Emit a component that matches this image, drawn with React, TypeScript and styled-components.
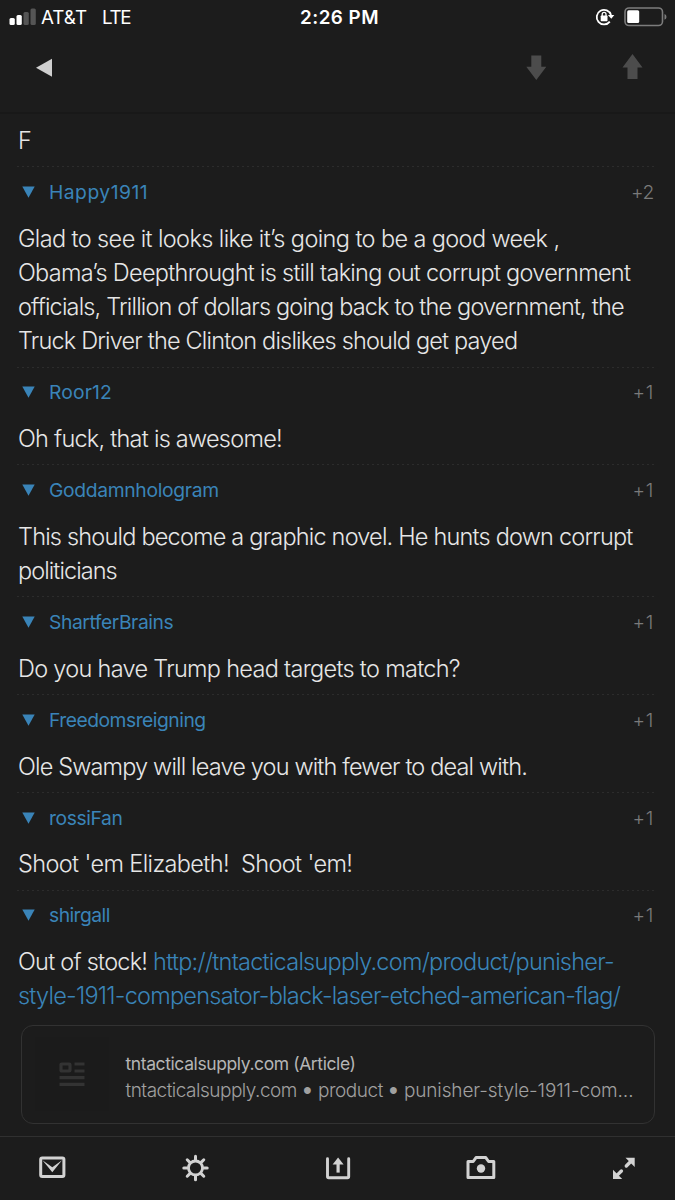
import React from "react";
import styled, { createGlobalStyle } from "styled-components";

const Global = createGlobalStyle`
  * { box-sizing: border-box; }
  body { margin: 0; background: #1c1c1c; }
`;

const Screen = styled.div`
  width: 675px;
  height: 1200px;
  display: flex;
  flex-direction: column;
  overflow: hidden;
  background: #1c1c1c;
  color: #e6e6e6;
  font-family: Inter, "Liberation Sans", sans-serif;
  font-weight: 300;
`;

const StatusBar = styled.header`
  height: 34px;
  display: grid;
  grid-template-columns: 1fr auto 1fr;
  align-items: center;
  padding: 0 8px 0 9px;
  color: #fff;
  font-size: 18.8px;
  font-weight: 400;
`;

const Carrier = styled.div`
  display: flex;
  align-items: center;
  gap: 4px;
  white-space: pre;
`;

const Network = styled.span`
  margin-left: 11px;
  letter-spacing: -1.3px;
`;

const Clock = styled.div`
  margin-left: 3px;
  font-weight: 600;
  letter-spacing: 0.5px;
`;

const Indicators = styled.div`
  display: flex;
  justify-content: flex-end;
  align-items: center;
  gap: 9px;
`;

const NavBar = styled.nav`
  height: 80px;
  display: flex;
  align-items: center;
  padding: 0 32px 12px 35px;
  border-bottom: 2px solid #181818;
`;

const NavArrows = styled.div`
  margin-left: auto;
  display: flex;
  gap: 74px;
`;

const Feed = styled.main`
  flex: 1;
  padding: 9.8px 20px 0 18px;
`;

const Line = styled.span<{ $tracking: number }>`
  display: block;
  white-space: pre;
  letter-spacing: ${(p) => p.$tracking}px;
`;

const Body = styled.p`
  margin: 0;
  font-size: 23.5px;
  line-height: 34.2px;
`;

const Comment = styled.article`
  padding-bottom: 8.2px;
`;

const Rule = styled.div`
  height: 1px;
  margin-left: -1px;
  background: repeating-linear-gradient(90deg, #2c2c2c 0 2px, transparent 2px 5px);
`;

const CommentHead = styled.header`
  height: 54.4px;
  display: flex;
  align-items: center;
  padding: 0 1px 5px 4px;
`;

const Author = styled.a<{ $tracking: number }>`
  margin-left: 14px;
  color: #3a84b8;
  font-size: 19.3px;
  font-weight: 400;
  letter-spacing: ${(p) => p.$tracking}px;
`;

const Score = styled.span<{ $tracking: number }>`
  margin-left: auto;
  color: #7a7a7a;
  font-size: 19.3px;
  letter-spacing: ${(p) => p.$tracking}px;
`;

const Link = styled.a`
  color: #3a84b8;
`;

const LinkCard = styled.a`
  height: 99px;
  margin: 3px 0 0 2.5px;
  padding: 0 18px 0 13px;
  display: flex;
  align-items: center;
  border: 1.5px solid #323232;
  border-radius: 12px;
`;

const Thumb = styled.div`
  width: 74px;
  height: 74px;
  display: flex;
  align-items: center;
  justify-content: center;
  background: #1b1b1b;
`;

const CardText = styled.div`
  margin-left: 17px;
  padding-top: 5px;
`;

const CardTitle = styled.div`
  font-size: 17.5px;
  font-weight: 400;
  line-height: 27px;
  letter-spacing: -0.4px;
  color: #b5b5b5;
`;

const CardPath = styled.div`
  display: flex;
  align-items: center;
  font-size: 19px;
  line-height: 27px;
  white-space: pre;
  color: #a0a0a0;
`;

const Crumb = styled.span<{ $tracking: number }>`
  letter-spacing: ${(p) => p.$tracking}px;
`;

const Bullet = styled.span`
  width: 21px;
  text-align: center;
  font-family: "Liberation Sans", sans-serif;
  font-size: 25px;
`;

const Toolbar = styled.footer`
  height: 64px;
  display: flex;
  align-items: center;
  justify-content: space-between;
  padding: 0 35px 2px 36px;
  border-top: 1.5px solid #303030;
`;

const SignalIcon = () => (
  <svg width="28" height="18" viewBox="0 0 28 18">
    <rect x="0.5" y="10" width="5.3" height="7" rx="1.5" fill="#fff" />
    <rect x="7.5" y="7" width="5.3" height="10" rx="1.5" fill="#fff" />
    <rect x="14.5" y="4" width="5.3" height="13" rx="1.5" fill="#555" />
    <rect x="21.5" y="0.5" width="5.3" height="16.5" rx="1.5" fill="#555" />
  </svg>
);

const LockIcon = () => (
  <svg width="20" height="18" viewBox="0 0 20 18">
    <path d="M14.8 13.6A7.3 7.3 0 1 1 16 7" fill="none" stroke="#fff" strokeWidth="1.8" />
    <path d="M12.9 7H19.3L16.3 10.8Z" fill="#fff" />
    <rect x="5.7" y="7.6" width="6.8" height="5.6" rx="0.6" fill="#fff" />
    <path d="M7.2 8V6.2a1.9 1.9 0 0 1 3.8 0V8" fill="none" stroke="#fff" strokeWidth="1.3" />
  </svg>
);

const BatteryIcon = () => (
  <svg width="43" height="20" viewBox="0 0 43 20">
    <rect x="1" y="1" width="37.5" height="17.5" rx="4" fill="none" stroke="#7c7c7c" strokeWidth="1.6" />
    <rect x="3.2" y="3.3" width="12" height="12.8" rx="1.5" fill="#fff" />
    <path d="M40.5 7v5.8q2-.8 2-2.9t-2-2.9Z" fill="#7c7c7c" />
  </svg>
);

const BackIcon = () => (
  <svg width="18" height="20" viewBox="0 0 18 20">
    <path d="M1 10.8 17 1.8v18Z" fill="#cfcfcf" />
  </svg>
);

const ArrowIcon = ({ up }: { up?: boolean }) => (
  <svg width="22" height="26" viewBox="0 0 22 26">
    <path d={up ? "M11.5 0 21.5 13.5H16.5V25H6.5V13.5H1.5Z" : "M6.3 1.5H16.3V12.7H21.3L11.3 26 1.3 12.7H6.3Z"} fill="#4c4c4c" />
  </svg>
);

const CollapseIcon = () => (
  <svg width="13" height="12" viewBox="0 0 13 12">
    <path d="M0.3 0.5H12.7L6.5 11.8Z" fill="#3a84b8" />
  </svg>
);

const ArticleIcon = () => (
  <svg width="26" height="26" viewBox="0 0 26 26" fill="none" stroke="#333" strokeWidth="3.2">
    <rect x="2" y="3" width="9" height="7" rx="0.8" />
    <path d="M15.5 3H25.5M15.5 10H25.5M0.5 16.6H25.5M0.5 23.4H25.5" />
  </svg>
);

const MailIcon = () => (
  <svg width="32" height="28" viewBox="0 0 32 28">
    <rect x="4.7" y="4" width="23.2" height="18.6" rx="1.5" fill="none" stroke="#d2d2d2" strokeWidth="3" />
    <path d="M6.5 6.2 16.3 13.2 26 6.2 16.3 18.3Z" fill="#d2d2d2" />
  </svg>
);

const GearIcon = () => (
  <svg width="32" height="32" viewBox="-16 -16 32 32" fill="none" stroke="#d2d2d2" strokeLinecap="round">
    <g transform="translate(0.5 0)">
      <circle r="7" strokeWidth="2.8" />
      {[0, 45, 90, 135, 180, 225, 270, 315].map((a) => (
        <path key={a} d="M0 -8V-11.7" strokeWidth="3" transform={`rotate(${a})`} />
      ))}
    </g>
  </svg>
);

const ShareIcon = () => (
  <svg width="32" height="28" viewBox="0 0 32 28" fill="none" stroke="#d2d2d2" strokeWidth="2.9">
    <path d="M5.5 4.8V22.6Q5.5 23.8 6.7 23.8H25.5Q26.7 23.8 26.7 22.6V4.8" strokeLinecap="round" />
    <path d="M16.1 18.6V8" strokeWidth="3.2" />
    <path d="M10.6 10.4 16.1 3.4l5.5 7Z" fill="#d2d2d2" stroke="none" />
  </svg>
);

const CameraIcon = () => (
  <svg width="32" height="28" viewBox="0 0 32 28">
    <path
      d="M3 7.5H8.2L11 3.6H20.8L23.6 7.5H28.8V23.6H3Z"
      fill="none"
      stroke="#d2d2d2"
      strokeWidth="3"
      strokeLinejoin="round"
    />
    <circle cx="16" cy="14.5" r="4.2" fill="#d2d2d2" />
  </svg>
);

const ExpandIcon = () => (
  <svg width="32" height="28" viewBox="0 0 32 28">
    <path d="M17.5 3.7H26.7V12.9ZM5 15.7V25H14.2Z" fill="#d2d2d2" />
    <path d="M18.3 12 23 7.3M13.4 17 8.7 21.6" stroke="#d2d2d2" strokeWidth="3.4" strokeLinecap="round" />
  </svg>
);

type TextLine = { text: string; tracking: number; link?: string };
type Entry = { author: string; tracking: number; score: number; lines: TextLine[] };

const entries: Entry[] = [
  {
    author: "Happy1911",
    tracking: 0.48,
    score: 2,
    lines: [
      { text: "Glad to see it looks like it’s going to be a good week ,", tracking: -0.61 },
      { text: "Obama’s Deepthrought is still taking out corrupt government", tracking: -0.72 },
      { text: "officials, Trillion of dollars going back to the government, the", tracking: -0.83 },
      { text: "Truck Driver the Clinton dislikes should get payed", tracking: -0.82 },
    ],
  },
  { author: "Roor12", tracking: 0.15, score: 1, lines: [{ text: "Oh fuck, that is awesome!", tracking: -0.75 }] },
  {
    author: "Goddamnhologram",
    tracking: -0.33,
    score: 1,
    lines: [
      { text: "This should become a graphic novel. He hunts down corrupt", tracking: -0.8 },
      { text: "politicians", tracking: -0.93 },
    ],
  },
  {
    author: "ShartferBrains",
    tracking: -0.43,
    score: 1,
    lines: [{ text: "Do you have Trump head targets to match?", tracking: -0.7 }],
  },
  {
    author: "Freedomsreigning",
    tracking: -0.5,
    score: 1,
    lines: [{ text: "Ole Swampy will leave you with fewer to deal with.", tracking: -0.84 }],
  },
  { author: "rossiFan", tracking: -0.4, score: 1, lines: [{ text: "Shoot 'em Elizabeth!  Shoot 'em!", tracking: -0.62 }] },
  {
    author: "shirgall",
    tracking: -0.55,
    score: 1,
    lines: [
      { text: "Out of stock! ", link: "http://tntacticalsupply.com/product/punisher-", tracking: -0.75 },
      { text: "", link: "style-1911-compensator-black-laser-etched-american-flag/", tracking: -0.76 },
    ],
  },
];

export default function App() {
  return (
    <Screen>
      <Global />
      <StatusBar>
        <Carrier>
          <SignalIcon />
          <span>AT&amp;T</span>
          <Network>LTE</Network>
        </Carrier>
        <Clock>2:26 PM</Clock>
        <Indicators>
          <LockIcon />
          <BatteryIcon />
        </Indicators>
      </StatusBar>
      <NavBar>
        <BackIcon />
        <NavArrows>
          <ArrowIcon />
          <ArrowIcon up />
        </NavArrows>
      </NavBar>
      <Feed>
        <Comment>
          <Body>F</Body>
        </Comment>
        {entries.map((e) => (
          <Comment key={e.author}>
            <Rule />
            <CommentHead>
              <CollapseIcon />
              <Author $tracking={e.tracking}>{e.author}</Author>
              <Score $tracking={e.score === 1 ? 0.6 : -0.4}>+{e.score}</Score>
            </CommentHead>
            <Body>
              {e.lines.map((l, i) => (
                <Line key={i} $tracking={l.tracking}>
                  {l.text}
                  {l.link && <Link>{l.link}</Link>}
                </Line>
              ))}
            </Body>
          </Comment>
        ))}
        <LinkCard>
          <Thumb>
            <ArticleIcon />
          </Thumb>
          <CardText>
            <CardTitle>tntacticalsupply.com (Article)</CardTitle>
            <CardPath>
              <Crumb $tracking={-0.5}>tntacticalsupply.com</Crumb>
              <Bullet>•</Bullet>
              <Crumb $tracking={-0.45}>product</Crumb>
              <Bullet>•</Bullet>
              <Crumb $tracking={-0.12}>punisher-style-1911-com…</Crumb>
            </CardPath>
          </CardText>
        </LinkCard>
      </Feed>
      <Toolbar>
        <MailIcon />
        <GearIcon />
        <ShareIcon />
        <CameraIcon />
        <ExpandIcon />
      </Toolbar>
    </Screen>
  );
}
